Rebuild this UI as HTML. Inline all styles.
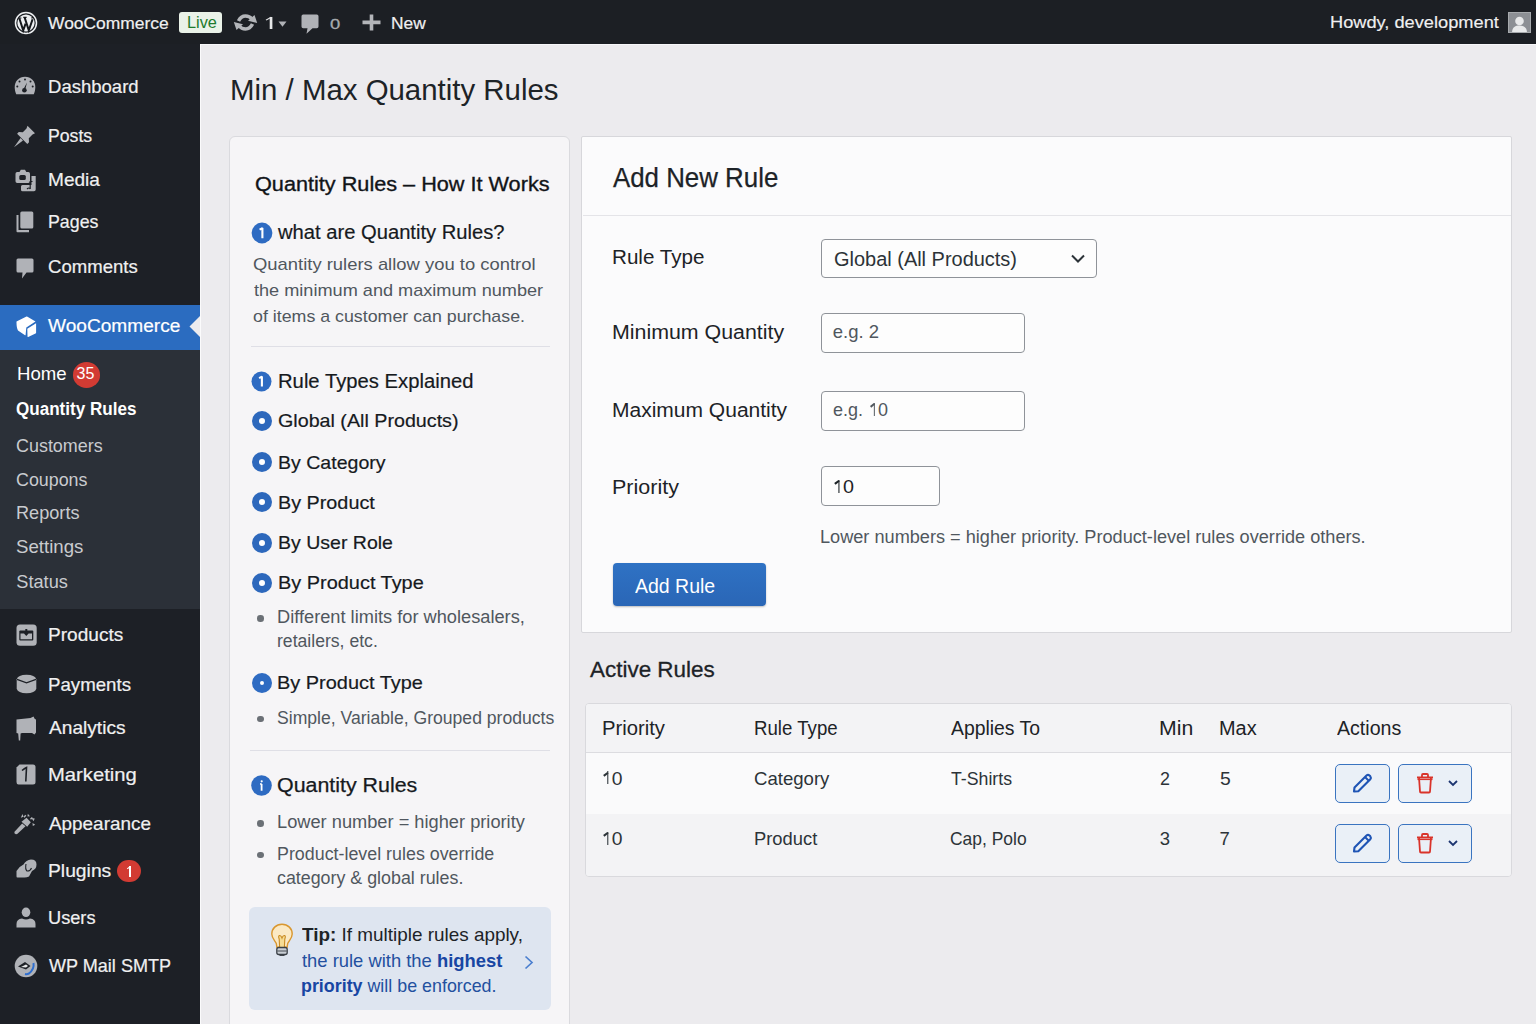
<!DOCTYPE html>
<html><head><meta charset="utf-8"><title>Min / Max Quantity Rules</title>
<style>
html,body{margin:0;padding:0;width:1536px;height:1024px;overflow:hidden;background:#ecebee;font-family:"Liberation Sans",sans-serif;}
.a{position:absolute;}
.t{position:absolute;line-height:1;white-space:nowrap;transform-origin:0 0;}
#bar{position:absolute;left:0;top:0;width:1536px;height:44px;background:#1c1f24;}
#side{position:absolute;left:0;top:44px;width:200px;height:980px;background:#1d2026;}
#sub{position:absolute;left:0;top:350px;width:200px;height:259px;background:#2b3038;}
#hl{position:absolute;left:0;top:305px;width:200px;height:45px;background:#2b6cc0;}
.card1{position:absolute;left:229.3px;top:136.3px;width:338.5px;height:920px;background:#f6f5f7;border:1.3px solid #dadade;border-radius:6px;}
.card2{position:absolute;left:581px;top:136px;width:929px;height:495px;background:#fbfbfc;border:1.5px solid #d7d7db;border-radius:2px;}
.inp{position:absolute;background:#fdfdfd;border:1.3px solid #8f9399;border-radius:4px;box-sizing:border-box;}
.sep{position:absolute;height:1.2px;background:#dfdfe6;}
.rad{position:absolute;border-radius:50%;background:#2e6bc2;box-sizing:border-box;}
.dot{position:absolute;width:6.5px;height:6.5px;border-radius:50%;background:#6b7076;}
.abtn{position:absolute;border:1.5px solid #3a74c0;border-radius:5px;background:#eaf0f7;box-sizing:border-box;}
.one{position:relative;-webkit-text-fill-color:transparent;-webkit-text-stroke:0!important}
.one::before{content:'';position:absolute;left:0.30em;top:0.21em;width:0.09em;height:0.695em;background:currentColor}
.one::after{content:'';position:absolute;left:0.08em;top:0.215em;width:0.27em;height:0.085em;background:currentColor;transform:rotate(-38deg);transform-origin:100% 0}
</style></head><body>
<div id="bar"></div>
<div id="side"></div>
<div id="hl"></div>
<div id="sub"></div>
<div class="a" style="left:200px;top:44px;width:1336px;height:1px;background:#f7f7f9"></div>
<div class="a" style="left:200px;top:44px;width:1px;height:980px;background:#fbfbfc"></div>
<!-- highlight arrow -->
<svg class="a" style="left:188px;top:315px" width="14" height="23" viewBox="0 0 14 23"><path d="M12 1 L1.5 11.5 L12 22 Z" fill="#ecebee"/></svg>
<!-- Live badge -->
<div class="a" style="left:179px;top:11.5px;width:43px;height:21.5px;background:#eaf2e8;border-radius:3px;"></div>
<!-- avatar -->
<div class="a" style="left:1508px;top:11.5px;width:22.5px;height:21.5px;background:#8c8f94;box-sizing:border-box;border:1px solid #a7aaad;overflow:hidden">
<svg width="21" height="20" viewBox="0 0 21 20" style="display:block"><circle cx="10.5" cy="8" r="4.3" fill="#e8e9ea"/><path d="M3 20 C3 14.5 6 12.5 10.5 12.5 C15 12.5 18 14.5 18 20 Z" fill="#e8e9ea"/></svg></div>

<!-- cards -->
<div class="card1"></div>
<div class="card2"></div>
<div class="sep" style="left:582.5px;top:214.5px;width:928px;background:#e4e4e8"></div>
<div class="sep" style="left:250.8px;top:346.2px;width:299.6px"></div>
<div class="sep" style="left:250.4px;top:749.5px;width:300px"></div>

<!-- form -->
<div class="inp" style="left:821px;top:238.5px;width:275.5px;height:39.5px"></div>
<svg class="a" style="left:1070px;top:253px" width="16" height="11" viewBox="0 0 16 11"><path d="M2 2.5 L8 8.5 L14 2.5" fill="none" stroke="#2c3338" stroke-width="2"/></svg>
<div class="inp" style="left:821px;top:313.3px;width:204px;height:39.5px"></div>
<div class="inp" style="left:821px;top:391.3px;width:204px;height:39.8px"></div>
<div class="inp" style="left:821px;top:466.3px;width:118.8px;height:39.8px"></div>
<div class="a" style="left:613px;top:563px;width:153.3px;height:43.3px;background:linear-gradient(#2f72c4,#2a66b6);border-radius:4px;box-shadow:0 1px 2px rgba(0,0,0,.25)"></div>

<!-- table -->
<div class="a" style="left:584.5px;top:703.3px;width:925.5px;height:171.5px;border:1.5px solid #d9d9dd;border-radius:4px;background:#f4f4f6;overflow:hidden">
  <div class="a" style="left:0;top:0;width:100%;height:48px;background:#f3f3f5"></div>
  <div class="a" style="left:0;top:47.5px;width:100%;height:1.5px;background:#dcdce0"></div>
  <div class="a" style="left:0;top:49px;width:100%;height:61px;background:#fafafb"></div>
  <div class="a" style="left:0;top:110px;width:100%;height:62px;background:#f3f3f5"></div>
</div>
<!-- action buttons -->
<div class="abtn" style="left:1335px;top:764px;width:54.5px;height:38.5px"></div>
<div class="abtn" style="left:1398px;top:764px;width:73.5px;height:38.5px"></div>
<div class="abtn" style="left:1335px;top:824px;width:54.5px;height:38.5px"></div>
<div class="abtn" style="left:1398px;top:824px;width:73.5px;height:38.5px"></div>
<svg class="a" style="left:1350px;top:771px" width="24" height="24" viewBox="0 0 24 24" id="pen1"><path d="M4 20.5 L4.5 16.5 L16.5 4.5 Q18 3.2 19.5 4.5 L20.3 5.3 Q21.5 6.8 20.3 8.2 L8.3 20.2 Z" fill="none" stroke="#1f55b5" stroke-width="2.1" stroke-linejoin="round"/><path d="M15 6 L19 10" stroke="#1f55b5" stroke-width="2"/></svg>
<svg class="a" style="left:1350px;top:831px" width="24" height="24" viewBox="0 0 24 24"><path d="M4 20.5 L4.5 16.5 L16.5 4.5 Q18 3.2 19.5 4.5 L20.3 5.3 Q21.5 6.8 20.3 8.2 L8.3 20.2 Z" fill="none" stroke="#1f55b5" stroke-width="2.1" stroke-linejoin="round"/><path d="M15 6 L19 10" stroke="#1f55b5" stroke-width="2"/></svg>
<svg class="a" style="left:1415px;top:772px" width="20" height="22" viewBox="0 0 20 22"><path d="M2 5.5 H18 M7 5.5 V3 Q7 2 8 2 H12 Q13 2 13 3 V5.5 M4 5.5 L5 19.5 Q5 20.5 6 20.5 H14 Q15 20.5 15 19.5 L16 5.5" fill="none" stroke="#d9342b" stroke-width="1.8" stroke-linejoin="round"/><path d="M2.5 7.5 H17.5" stroke="#d9342b" stroke-width="1.2"/></svg>
<svg class="a" style="left:1415px;top:832px" width="20" height="22" viewBox="0 0 20 22"><path d="M2 5.5 H18 M7 5.5 V3 Q7 2 8 2 H12 Q13 2 13 3 V5.5 M4 5.5 L5 19.5 Q5 20.5 6 20.5 H14 Q15 20.5 15 19.5 L16 5.5" fill="none" stroke="#d9342b" stroke-width="1.8" stroke-linejoin="round"/><path d="M2.5 7.5 H17.5" stroke="#d9342b" stroke-width="1.2"/></svg>
<svg class="a" style="left:1447px;top:779px" width="12" height="9" viewBox="0 0 12 9"><path d="M2 2 L6 6 L10 2" fill="none" stroke="#1d3570" stroke-width="1.8"/></svg>
<svg class="a" style="left:1447px;top:839px" width="12" height="9" viewBox="0 0 12 9"><path d="M2 2 L6 6 L10 2" fill="none" stroke="#1d3570" stroke-width="1.8"/></svg>

<!-- left panel icons -->
<svg class="a" style="left:251px;top:222px" width="22" height="22" viewBox="0 0 22 22"><circle cx="11" cy="11" r="10.4" fill="#2e6bc2"/><path d="M8.6 7.6 L11.4 6.1 V16.2" fill="none" stroke="#fff" stroke-width="2.1" stroke-linejoin="bevel"/></svg>
<svg class="a" style="left:251px;top:370.5px" width="21" height="21" viewBox="0 0 21 21"><circle cx="10.5" cy="10.5" r="10" fill="#2e6bc2"/><path d="M8.1 7.1 L10.9 5.6 V15.6" fill="none" stroke="#fff" stroke-width="2.1" stroke-linejoin="bevel"/></svg>
<svg class="a" style="left:251px;top:775px" width="21" height="21" viewBox="0 0 21 21"><circle cx="10.5" cy="10.5" r="10.3" fill="#2e6bc2"/><path d="M10.6 9 V15.8 M9.2 9 H10.6" fill="none" stroke="#fff" stroke-width="1.8"/><circle cx="10.7" cy="6.3" r="1.1" fill="#fff"/></svg>
<div class="rad" style="left:251.7px;top:410.5px;width:20px;height:20px;border:7.1px solid #2d68bc;background:#fff"></div>
<div class="rad" style="left:251.7px;top:452.1px;width:20px;height:20px;border:7.1px solid #2d68bc;background:#fff"></div>
<div class="rad" style="left:251.7px;top:491.8px;width:20px;height:20px;border:7.1px solid #2d68bc;background:#fff"></div>
<div class="rad" style="left:251.7px;top:532.8px;width:20px;height:20px;border:7.1px solid #2d68bc;background:#fff"></div>
<div class="rad" style="left:251.7px;top:572.6px;width:20px;height:20px;border:7.1px solid #2d68bc;background:#fff"></div>
<div class="rad" style="left:251.5px;top:672.5px;width:20px;height:20px;border:8.4px solid #2e6bc2;background:#fff"></div>
<div class="dot" style="left:257.2px;top:615px"></div>
<div class="dot" style="left:257.2px;top:715.5px"></div>
<div class="dot" style="left:257.2px;top:820.2px"></div>
<div class="dot" style="left:257.2px;top:851.5px"></div>

<!-- tip -->
<div class="a" style="left:249px;top:907px;width:301.5px;height:103px;background:#dee5f0;border-radius:6px"></div>
<svg class="a" style="left:269px;top:922px" width="26" height="36" viewBox="0 0 26 36"><path d="M13 2.3 C7 2.3 2.8 6.6 2.8 12 C2.8 16.3 5.8 18.6 7.3 21.5 L7.9 25.3 H18.1 L18.7 21.5 C20.2 18.6 23.2 16.3 23.2 12 C23.2 6.6 19 2.3 13 2.3 Z" fill="#fbe9c4" stroke="#d9972f" stroke-width="1.4"/><path d="M10.6 25 L10.2 17 Q9 14 10.5 13.5 Q12 13.2 13 16 Q14 13.2 15.5 13.5 Q17 14 15.8 17 L15.4 25" fill="#f6dc94" stroke="#c98a22" stroke-width="1.1"/><rect x="7.8" y="25.5" width="10.4" height="7" rx="2" fill="#c9ced4" stroke="#3b4047" stroke-width="1.3"/><path d="M8.3 29 H17.7" stroke="#3b4047" stroke-width="0.9"/><path d="M10.5 33.2 H15.5" stroke="#3b4047" stroke-width="1.5"/></svg>
<svg class="a" style="left:522px;top:954px" width="14" height="17" viewBox="0 0 14 17"><path d="M3.5 2.5 L10 8.5 L3.5 14.5" fill="none" stroke="#4b7fcf" stroke-width="1.7"/></svg>
<!-- WP logo -->
<svg class="a" style="left:14px;top:10.5px" width="24" height="24" viewBox="0 0 24 24"><circle cx="12" cy="12" r="10.5" fill="none" stroke="#eef0f2" stroke-width="1.5"/><circle cx="12" cy="12" r="8.6" fill="#eef0f2"/><path d="M5.3 7.2 L9.2 19.4 L11.6 12.6" fill="none" stroke="#15181c" stroke-width="2"/><path d="M10.6 6.4 L14.8 19.4 L18.6 8.2" fill="none" stroke="#15181c" stroke-width="2"/><path d="M4.2 7 H7.4 M9.3 6.3 H12.6 M17.4 7.2 Q18.5 6.2 19.6 6.8" stroke="#15181c" stroke-width="1.2" fill="none"/></svg>
<!-- sync -->
<svg class="a" style="left:233px;top:13px" width="25" height="19" viewBox="0 0 25 19"><path d="M5.5 8 Q8 3 12.5 3 Q16.5 3 18.8 6" fill="none" stroke="#b3b5b9" stroke-width="3.6"/><path d="M15 7.8 L24.2 10 L21.5 2 Z" fill="#b3b5b9"/><path d="M19.5 11 Q17 16 12.5 16 Q8.5 16 6.2 13" fill="none" stroke="#b3b5b9" stroke-width="3.6"/><path d="M10 11.2 L0.8 9 L3.5 17 Z" fill="#b3b5b9"/></svg>
<svg class="a" style="left:277.5px;top:20.5px" width="9" height="6" viewBox="0 0 9 6"><path d="M0.5 0.5 H8.5 L4.5 5.8 Z" fill="#b0b2b7"/></svg>
<!-- comment -->
<svg class="a" style="left:300.5px;top:13.5px" width="18" height="20" viewBox="0 0 18 20"><path d="M2.2 0.5 H15.8 Q17.5 0.5 17.5 2.2 V12.5 Q17.5 14.2 15.8 14.2 H11.5 L5.5 19.8 L6.5 14.2 H2.2 Q0.5 14.2 0.5 12.5 V2.2 Q0.5 0.5 2.2 0.5 Z" fill="#b0b2b7"/></svg>
<!-- plus -->
<svg class="a" style="left:361.5px;top:13.8px" width="19" height="17" viewBox="0 0 19 17"><path d="M9.5 0.5 V16.5 M0.5 8.4 H18.5" stroke="#b3b5b9" stroke-width="3.6"/></svg>

<!-- sidebar icons -->
<!-- dashboard gauge -->
<svg class="a" style="left:13.5px;top:75.5px" width="22" height="19" viewBox="0 0 22 19"><path d="M11 0.8 C5 0.8 0.7 5.3 0.7 11 C0.7 13.5 1.2 15.8 2.2 18.2 H19.8 C20.8 15.8 21.3 13.5 21.3 11 C21.3 5.3 17 0.8 11 0.8 Z" fill="#b0b2b7"/><circle cx="11" cy="3.5" r="1" fill="#1d2026"/><circle cx="5.5" cy="5.5" r="1" fill="#1d2026"/><circle cx="16.5" cy="5.5" r="1" fill="#1d2026"/><circle cx="3.3" cy="10.5" r="1" fill="#1d2026"/><circle cx="18.7" cy="10.5" r="1" fill="#1d2026"/><path d="M11 14.6 L13 6.5 L9.3 13.5 Z" fill="#1d2026"/><circle cx="10.4" cy="14.3" r="2.3" fill="#1d2026"/></svg>
<!-- pin -->
<svg class="a" style="left:13px;top:125px" width="23" height="23" viewBox="0 0 23 23"><path d="M14.5 0.8 L22 8.3 L19.5 9.5 L15.8 13.2 L16 17.2 L14.3 18.9 L4.1 8.7 L5.8 7 L9.8 7.2 L13.5 3.5 Z" fill="#b0b2b7"/><path d="M7.6 13 L10 15.4 L1 22.2 Z" fill="#b0b2b7"/></svg>
<!-- media -->
<svg class="a" style="left:13.5px;top:169px" width="23" height="23" viewBox="0 0 23 23"><path d="M3.2 3 H5.5 L6.8 0.8 H11 L12.3 3 H14.3 Q16 3 16 4.7 V12.3 Q16 14 14.3 14 H3.2 Q1.5 14 1.5 12.3 V4.7 Q1.5 3 3.2 3 Z" fill="#b0b2b7"/><rect x="5.3" y="6" width="6.5" height="5" rx="1.5" fill="#1d2026"/><path d="M17.5 7 H21.7 V20.5 Q21.7 22.2 20 22.2 H8.5 Q7 22.2 7 20.7 V17.5 Q7 16 8.5 16 H17.5 Z" fill="#b0b2b7"/><path d="M13 20 Q15.2 18 16.2 20 M16.2 20 V12.5 H18.5" fill="none" stroke="#1d2026" stroke-width="1.2"/></svg>
<!-- pages -->
<svg class="a" style="left:15.5px;top:210.5px" width="18" height="22" viewBox="0 0 18 22"><path d="M0.5 4 H2.5 V19 H13 V21.3 H1.5 Q0.5 21.3 0.5 20.3 Z" fill="#b0b2b7"/><rect x="4.3" y="0.5" width="13" height="17" rx="1.5" fill="#b0b2b7"/></svg>
<!-- comments -->
<svg class="a" style="left:15.5px;top:257.5px" width="18" height="21" viewBox="0 0 18 21"><path d="M2 0.5 H16 Q17.5 0.5 17.5 2 V13 Q17.5 14.5 16 14.5 H10.5 L6 20.5 L6.5 14.5 H2 Q0.5 14.5 0.5 13 V2 Q0.5 0.5 2 0.5 Z" fill="#b0b2b7"/></svg>
<!-- woo cube -->
<svg class="a" style="left:14.5px;top:315.5px" width="23" height="22" viewBox="0 0 23 22"><path d="M1.5 6.5 Q1 5.8 2 5.3 L11.5 0.6 Q12 0.4 12.5 0.7 L20.5 5.6 L11.3 11.6 L10.6 19 Q10.5 19.5 10 19.2 L3 14.5 Q1.5 12 1.5 6.5 Z" fill="#fff"/><path d="M12.3 12.8 L21.1 7.3 V16.8 Q21 17.3 20.5 17.6 L13.2 21 Q12.5 21.2 12.5 20.6 Z" fill="#fff"/></svg>
<!-- badge 35 -->
<div class="a" style="left:72.8px;top:362px;width:27.5px;height:25.5px;border-radius:50%;background:#d23b33"></div>
<!-- products -->
<svg class="a" style="left:15.5px;top:624px" width="21" height="22" viewBox="0 0 21 22"><rect x="0.5" y="0.5" width="20.2" height="21.2" rx="3.5" fill="#b0b2b7"/><rect x="3.3" y="6.5" width="14" height="10" rx="1" fill="#1d2026"/><path d="M4.5 9.5 H8 L10.3 12 L12.6 9.5 H16 V15.3 H4.5 Z" fill="#b0b2b7"/><rect x="9.3" y="5" width="2" height="5" fill="#1d2026"/></svg>
<!-- payments -->
<svg class="a" style="left:15.5px;top:673.5px" width="21" height="20" viewBox="0 0 21 20"><path d="M0.7 5.2 Q2 1 10.5 0.8 Q19 1 20.3 5.2 V14.8 Q19 19.2 10.5 19.3 Q2 19.2 0.7 14.8 Z" fill="#b0b2b7"/><path d="M1 5.3 L10.5 8.8 L20 5.3" fill="none" stroke="#1d2026" stroke-width="1.3"/></svg>
<!-- analytics flag -->
<svg class="a" style="left:15.5px;top:715.5px" width="21" height="25" viewBox="0 0 21 25"><path d="M0.5 3.5 L14.5 2 L17.5 0.5 L18.8 3 L20 3.5 V16.5 L18.5 18.5 L16 17 L6 17 L4.6 17.5 L4.2 24.5 L2.8 24.5 L2.2 17.5 L0.5 17 Z" fill="#b0b2b7"/></svg>
<!-- marketing -->
<svg class="a" style="left:16px;top:763.5px" width="20" height="21" viewBox="0 0 20 21"><path d="M3.5 0.5 H17 Q19.5 0.5 19.5 3 V18 Q19.5 20.5 17 20.5 H2.5 Q0.5 20.5 0.5 18 V3.5 Z" fill="#b0b2b7"/><path d="M6 6.5 Q8.5 4.5 10.5 3.5 L9.8 17.5" fill="none" stroke="#1d2026" stroke-width="1.6"/></svg>
<!-- appearance -->
<svg class="a" style="left:13px;top:813px" width="23" height="22" viewBox="0 0 23 22"><path d="M2.5 21 Q0.8 20.5 1.5 18.8 L9.2 10.5 L12.5 13.3 L4.5 20.8 Q3.5 21.5 2.5 21 Z" fill="#b0b2b7"/><path d="M8.5 8.8 L13.5 4.8 L17.8 9.2 L14.2 13.8 Z" fill="#b0b2b7"/><path d="M9.5 1 L10.5 3.8 L7.8 4.8 Z M14.8 0.8 L14.5 3.6 L17 3.2 Z M18.5 5 L21.8 5.6 L20.5 8.2 Z M19.5 10 L22.2 11.8 L19.8 13 Z" fill="#b0b2b7"/><path d="M11 4.2 L12.8 2.2 M17.5 6.2 L19.3 4.4" stroke="#b0b2b7" stroke-width="1.4"/></svg>
<!-- plugins -->
<svg class="a" style="left:15.5px;top:859px" width="21" height="19" viewBox="0 0 21 19"><path d="M0.5 12 Q3 7.5 7.5 5.5 Q10 1 15 0.5 Q20.5 0.5 20.5 5.5 Q20.5 10 16 12 L13 17.5 Q11 18.5 8.5 18.5 H1.5 Q0.3 18.5 0.5 17 Z" fill="#b0b2b7"/><path d="M10 5 Q9 10 11 12 Q14 12.5 15.5 9" fill="none" stroke="#1d2026" stroke-width="1.1"/></svg>
<!-- badge 1 -->
<div class="a" style="left:117px;top:859.7px;width:23.5px;height:22.8px;border-radius:50%;background:#d23b33"></div>
<!-- users -->
<svg class="a" style="left:16px;top:906.5px" width="20" height="21" viewBox="0 0 20 21"><ellipse cx="10" cy="5.3" rx="4.3" ry="4.8" fill="#b0b2b7"/><path d="M0.5 20.5 V17 Q0.5 12 6 11.5 Q10 13.5 14 11.5 Q19.5 12 19.5 17 V20.5 Z" fill="#b0b2b7"/></svg>
<!-- wp mail smtp -->
<svg class="a" style="left:14px;top:953.5px" width="24" height="24" viewBox="0 0 24 24"><circle cx="12" cy="12" r="11.3" fill="#b0b2b7"/><path d="M4 12.5 L11 8 L16.5 12 L12 15.5 Z" fill="#1d2026"/><path d="M7 13 L12 10.5 L14 12 L12 13.5 Z" fill="#e8e9ea"/><path d="M19.5 9 Q20.5 15 15 19.5 Q13 20.5 11 20" fill="none" stroke="#2f6fd0" stroke-width="2"/></svg>
<div class="t" style="left:48.40px;top:14.99px;font-size:17.3px;font-weight:400;color:#f0f0f1;transform:scaleX(1.0084);-webkit-text-stroke:0.2px #f0f0f1;">WooCommerce</div>
<div class="t" style="left:186.86px;top:14.19px;font-size:17.3px;font-weight:400;color:#1d7a2c;transform:scaleX(0.9433);">Live</div>
<div class="t" style="left:262.92px;top:14.25px;font-size:17px;font-weight:400;color:#e6e7e8;transform:scaleX(1.3400);"><span class="one">1</span></div>
<div class="t" style="left:329.77px;top:15.55px;font-size:15px;font-weight:400;color:#a7aaad;transform:scaleX(1.2286);-webkit-text-stroke:0.3px #a7aaad;">0</div>
<div class="t" style="left:390.95px;top:15.08px;font-size:16.5px;font-weight:400;color:#f0f0f1;transform:scaleX(1.0500);-webkit-text-stroke:0.2px #f0f0f1;">New</div>
<div class="t" style="left:1329.95px;top:14.29px;font-size:17.3px;font-weight:400;color:#f0f0f1;transform:scaleX(1.0547);-webkit-text-stroke:0.15px #f0f0f1;">Howdy, development</div>
<div class="t" style="left:48.10px;top:78.08px;font-size:18.5px;font-weight:400;color:#f0f0f1;transform:scaleX(1.0000);-webkit-text-stroke:0.2px #f0f0f1;">Dashboard</div>
<div class="t" style="left:48.14px;top:126.58px;font-size:18.5px;font-weight:400;color:#f0f0f1;transform:scaleX(0.9556);-webkit-text-stroke:0.2px #f0f0f1;">Posts</div>
<div class="t" style="left:47.67px;top:171.28px;font-size:18.5px;font-weight:400;color:#f0f0f1;transform:scaleX(1.0306);-webkit-text-stroke:0.2px #f0f0f1;">Media</div>
<div class="t" style="left:48.14px;top:212.98px;font-size:18.5px;font-weight:400;color:#f0f0f1;transform:scaleX(0.9608);-webkit-text-stroke:0.2px #f0f0f1;">Pages</div>
<div class="t" style="left:47.70px;top:258.47px;font-size:18.5px;font-weight:400;color:#f0f0f1;transform:scaleX(1.0034);-webkit-text-stroke:0.2px #f0f0f1;">Comments</div>
<div class="t" style="left:48.10px;top:317.02px;font-size:18.8px;font-weight:400;color:#ffffff;transform:scaleX(1.0169);-webkit-text-stroke:0.2px #fff;">WooCommerce</div>
<div class="t" style="left:16.99px;top:365.47px;font-size:18.5px;font-weight:400;color:#ffffff;transform:scaleX(1.0062);">Home</div>
<div class="t" style="left:16.32px;top:401.12px;font-size:17.5px;font-weight:700;color:#ffffff;transform:scaleX(0.9754);">Quantity Rules</div>
<div class="t" style="left:16.31px;top:437.03px;font-size:18.2px;font-weight:400;color:#c9cbcf;transform:scaleX(0.9860);">Customers</div>
<div class="t" style="left:16.32px;top:470.53px;font-size:18.2px;font-weight:400;color:#c9cbcf;transform:scaleX(0.9817);">Coupons</div>
<div class="t" style="left:16.30px;top:503.83px;font-size:18.2px;font-weight:400;color:#c9cbcf;transform:scaleX(0.9968);">Reports</div>
<div class="t" style="left:16.27px;top:538.43px;font-size:18.2px;font-weight:400;color:#c9cbcf;transform:scaleX(1.0250);">Settings</div>
<div class="t" style="left:16.30px;top:572.63px;font-size:18.2px;font-weight:400;color:#c9cbcf;transform:scaleX(1.0000);">Status</div>
<div class="t" style="left:48.07px;top:626.47px;font-size:18.5px;font-weight:400;color:#f0f0f1;transform:scaleX(1.0306);-webkit-text-stroke:0.2px #f0f0f1;">Products</div>
<div class="t" style="left:48.09px;top:675.57px;font-size:18.5px;font-weight:400;color:#f0f0f1;transform:scaleX(1.0086);-webkit-text-stroke:0.2px #f0f0f1;">Payments</div>
<div class="t" style="left:49.10px;top:718.57px;font-size:18.5px;font-weight:400;color:#f0f0f1;transform:scaleX(1.0338);-webkit-text-stroke:0.2px #f0f0f1;">Analytics</div>
<div class="t" style="left:48.01px;top:766.17px;font-size:18.5px;font-weight:400;color:#f0f0f1;transform:scaleX(1.0924);-webkit-text-stroke:0.2px #f0f0f1;">Marketing</div>
<div class="t" style="left:49.10px;top:814.57px;font-size:18.5px;font-weight:400;color:#f0f0f1;transform:scaleX(1.0212);-webkit-text-stroke:0.2px #f0f0f1;">Appearance</div>
<div class="t" style="left:48.06px;top:861.77px;font-size:18.5px;font-weight:400;color:#f0f0f1;transform:scaleX(1.0424);-webkit-text-stroke:0.2px #f0f0f1;">Plugins</div>
<div class="t" style="left:48.12px;top:908.97px;font-size:18.5px;font-weight:400;color:#f0f0f1;transform:scaleX(0.9830);-webkit-text-stroke:0.2px #f0f0f1;">Users</div>
<div class="t" style="left:49.10px;top:957.17px;font-size:18.5px;font-weight:400;color:#f0f0f1;transform:scaleX(0.9758);-webkit-text-stroke:0.2px #f0f0f1;">WP Mail SMTP</div>
<div class="t" style="left:229.66px;top:75.52px;font-size:28.8px;font-weight:400;color:#1d2327;transform:scaleX(1.0213);">Min / Max Quantity Rules</div>
<div class="t" style="left:613.00px;top:165.45px;font-size:27px;font-weight:400;color:#1d2327;transform:scaleX(0.9576);-webkit-text-stroke:0.25px #1d2327;">Add New Rule</div>
<div class="t" style="left:612.14px;top:247.00px;font-size:20px;font-weight:400;color:#1d2327;transform:scaleX(1.0310);">Rule Type</div>
<div class="t" style="left:612.06px;top:322.20px;font-size:20px;font-weight:400;color:#1d2327;transform:scaleX(1.0679);">Minimum Quantity</div>
<div class="t" style="left:611.80px;top:400.20px;font-size:20px;font-weight:400;color:#1d2327;transform:scaleX(1.0503);">Maximum Quantity</div>
<div class="t" style="left:611.75px;top:477.00px;font-size:20px;font-weight:400;color:#1d2327;transform:scaleX(1.0750);">Priority</div>
<div class="t" style="left:834.40px;top:249.10px;font-size:20px;font-weight:400;color:#2c3338;transform:scaleX(0.9978);">Global (All Products)</div>
<div class="t" style="left:832.80px;top:323.27px;font-size:18.5px;font-weight:400;color:#50575e;transform:scaleX(1.0000);">e.g. 2</div>
<div class="t" style="left:832.53px;top:401.47px;font-size:18.5px;font-weight:400;color:#50575e;transform:scaleX(0.9727);">e.g. <span class="one">1</span>0</div>
<div class="t" style="left:832.27px;top:478.27px;font-size:18.5px;font-weight:400;color:#1d2327;transform:scaleX(1.0667);"><span class="one">1</span>0</div>
<div class="t" style="left:820.39px;top:527.80px;font-size:18px;font-weight:400;color:#50575e;transform:scaleX(1.0078);">Lower numbers = higher priority. Product-level rules override others.</div>
<div class="t" style="left:635.20px;top:575.60px;font-size:20px;font-weight:400;color:#ffffff;transform:scaleX(0.9744);">Add Rule</div>
<div class="t" style="left:589.60px;top:659.08px;font-size:22.5px;font-weight:400;color:#1d2327;transform:scaleX(0.9976);-webkit-text-stroke:0.3px #1d2327;">Active Rules</div>
<div class="t" style="left:602.23px;top:718.62px;font-size:19.5px;font-weight:400;color:#1d2327;transform:scaleX(1.0373);">Priority</div>
<div class="t" style="left:753.79px;top:718.62px;font-size:19.5px;font-weight:400;color:#1d2327;transform:scaleX(0.9565);">Rule Type</div>
<div class="t" style="left:950.60px;top:718.62px;font-size:19.5px;font-weight:400;color:#1d2327;transform:scaleX(0.9933);">Applies To</div>
<div class="t" style="left:1158.62px;top:718.62px;font-size:19.5px;font-weight:400;color:#1d2327;transform:scaleX(1.0893);">Min</div>
<div class="t" style="left:1218.56px;top:718.62px;font-size:19.5px;font-weight:400;color:#1d2327;transform:scaleX(1.0206);">Max</div>
<div class="t" style="left:1336.60px;top:718.62px;font-size:19.5px;font-weight:400;color:#1d2327;transform:scaleX(1.0048);">Actions</div>
<div class="t" style="left:600.71px;top:769.57px;font-size:18.5px;font-weight:400;color:#2c3338;transform:scaleX(1.0444);"><span class="one">1</span>0</div>
<div class="t" style="left:754.40px;top:769.57px;font-size:18.5px;font-weight:400;color:#2c3338;transform:scaleX(1.0041);">Category</div>
<div class="t" style="left:950.60px;top:769.57px;font-size:18.5px;font-weight:400;color:#2c3338;transform:scaleX(0.9571);">T-Shirts</div>
<div class="t" style="left:1159.83px;top:769.57px;font-size:18.5px;font-weight:400;color:#2c3338;transform:scaleX(0.9667);">2</div>
<div class="t" style="left:1219.56px;top:769.57px;font-size:18.5px;font-weight:400;color:#2c3338;transform:scaleX(1.0444);">5</div>
<div class="t" style="left:600.71px;top:830.48px;font-size:18.5px;font-weight:400;color:#2c3338;transform:scaleX(1.0444);"><span class="one">1</span>0</div>
<div class="t" style="left:754.41px;top:830.48px;font-size:18.5px;font-weight:400;color:#2c3338;transform:scaleX(0.9921);">Product</div>
<div class="t" style="left:949.66px;top:830.48px;font-size:18.5px;font-weight:400;color:#2c3338;transform:scaleX(0.9437);">Cap, Polo</div>
<div class="t" style="left:1159.80px;top:830.48px;font-size:18.5px;font-weight:400;color:#2c3338;transform:scaleX(1.0000);">3</div>
<div class="t" style="left:1219.60px;top:830.48px;font-size:18.5px;font-weight:400;color:#2c3338;transform:scaleX(1.0000);">7</div>
<div class="t" style="left:254.54px;top:173.82px;font-size:20.5px;font-weight:400;color:#111418;transform:scaleX(1.0567);-webkit-text-stroke:0.35px #111418;">Quantity Rules &ndash; How It Works</div>
<div class="t" style="left:277.50px;top:222.20px;font-size:20px;font-weight:400;color:#161a1e;transform:scaleX(1.0089);-webkit-text-stroke:0.2px #161a1e;">what are Quantity Rules?</div>
<div class="t" style="left:253.12px;top:256.35px;font-size:17px;font-weight:400;color:#50575e;transform:scaleX(1.0834);">Quantity rulers allow you to control</div>
<div class="t" style="left:254.20px;top:281.80px;font-size:17px;font-weight:400;color:#50575e;transform:scaleX(1.0664);">the minimum and maximum number</div>
<div class="t" style="left:253.15px;top:308.45px;font-size:17px;font-weight:400;color:#50575e;transform:scaleX(1.0467);">of items a customer can purchase.</div>
<div class="t" style="left:277.78px;top:370.50px;font-size:20px;font-weight:400;color:#161a1e;transform:scaleX(1.0121);-webkit-text-stroke:0.2px #161a1e;">Rule Types Explained</div>
<div class="t" style="left:277.96px;top:411.15px;font-size:19px;font-weight:400;color:#161a1e;transform:scaleX(1.0360);-webkit-text-stroke:0.2px #161a1e;">Global (All Products)</div>
<div class="t" style="left:277.97px;top:452.60px;font-size:19px;font-weight:400;color:#161a1e;transform:scaleX(1.0288);-webkit-text-stroke:0.2px #161a1e;">By Category</div>
<div class="t" style="left:277.96px;top:492.65px;font-size:19px;font-weight:400;color:#161a1e;transform:scaleX(1.0413);-webkit-text-stroke:0.2px #161a1e;">By Product</div>
<div class="t" style="left:277.97px;top:533.25px;font-size:19px;font-weight:400;color:#161a1e;transform:scaleX(1.0273);-webkit-text-stroke:0.2px #161a1e;">By User Role</div>
<div class="t" style="left:277.95px;top:572.85px;font-size:19px;font-weight:400;color:#161a1e;transform:scaleX(1.0482);-webkit-text-stroke:0.2px #161a1e;">By Product Type</div>
<div class="t" style="left:276.86px;top:609.33px;font-size:17.5px;font-weight:400;color:#50575e;transform:scaleX(1.0415);">Different limits for wholesalers,</div>
<div class="t" style="left:276.89px;top:633.23px;font-size:17.5px;font-weight:400;color:#50575e;transform:scaleX(1.0061);">retailers, etc.</div>
<div class="t" style="left:277.45px;top:672.60px;font-size:19px;font-weight:400;color:#161a1e;transform:scaleX(1.0496);-webkit-text-stroke:0.2px #161a1e;">By Product Type</div>
<div class="t" style="left:276.90px;top:710.33px;font-size:17.5px;font-weight:400;color:#50575e;transform:scaleX(1.0047);">Simple, Variable, Grouped products</div>
<div class="t" style="left:277.43px;top:775.30px;font-size:20px;font-weight:400;color:#161a1e;transform:scaleX(1.0692);-webkit-text-stroke:0.25px #161a1e;">Quantity Rules</div>
<div class="t" style="left:276.86px;top:814.33px;font-size:17.5px;font-weight:400;color:#50575e;transform:scaleX(1.0422);">Lower number = higher priority</div>
<div class="t" style="left:276.88px;top:845.52px;font-size:17.5px;font-weight:400;color:#50575e;transform:scaleX(1.0199);">Product-level rules override</div>
<div class="t" style="left:276.88px;top:869.73px;font-size:17.5px;font-weight:400;color:#50575e;transform:scaleX(1.0189);">category &amp; global rules.</div>
<div class="t" style="left:302.40px;top:925.35px;font-size:19px;font-weight:400;color:#1d2327;transform:scaleX(0.9946);"><b style="font-weight:700">Tip:</b> If multiple rules apply,</div>
<div class="t" style="left:302.00px;top:951.45px;font-size:19px;font-weight:400;color:#23509f;transform:scaleX(0.9676);">the rule with the <b style="font-weight:700;color:#1846a3">highest</b></div>
<div class="t" style="left:301.06px;top:976.25px;font-size:19px;font-weight:400;color:#23509f;transform:scaleX(0.9398);"><b style="font-weight:700;color:#1846a3">priority</b> will be enforced.</div>
<div class="t" style="left:76.5px;top:366px;font-size:16px;color:#fff;">35</div>
<div class="t" style="left:124.5px;top:864px;font-size:15.5px;color:#fff;"><span class="one">1</span></div>
</body></html>
